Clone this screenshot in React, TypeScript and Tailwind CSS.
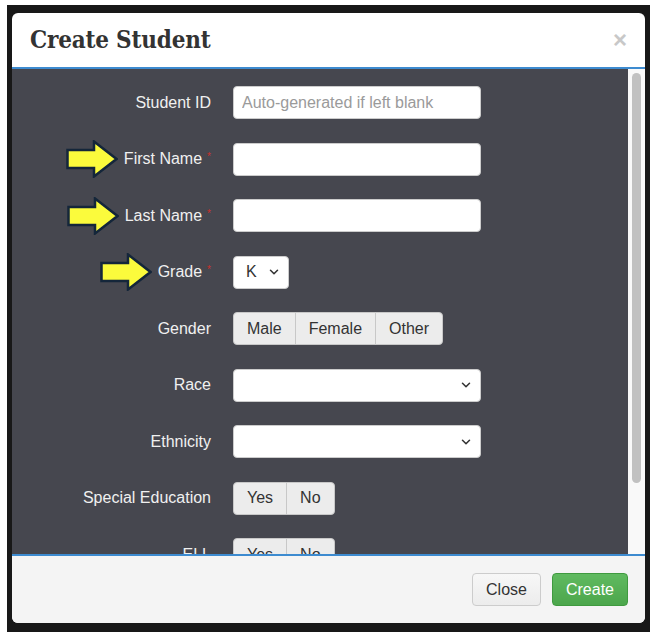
import { ChevronDown } from "lucide-react";

const sans = "font-['Liberation_Sans',Arial,sans-serif]";

function Arrow() {
  return (
    <svg width="52" height="38" viewBox="0 0 52 38" className="shrink-0">
      <polygon
        points="1.5,10 28,10 28,1.5 50.5,19 28,36.5 28,28 1.5,28"
        fill="#fbfb3c"
        stroke="#14263a"
        strokeWidth="2.5"
        strokeLinejoin="miter"
      />
    </svg>
  );
}

function Label({
  text,
  required,
  arrow,
}: {
  text: string;
  required?: boolean;
  arrow?: boolean;
}) {
  return (
    <div className="flex items-center justify-end gap-[6px] h-[33px]">
      {arrow && <Arrow />}
      <span className="text-[16px] text-[#f0f0f0] whitespace-nowrap">
        {text}
        {required && (
          <span className="relative -top-[4px] ml-[5px] text-[10px] text-[#c9302c]">
            *
          </span>
        )}
      </span>
    </div>
  );
}

function TextInput({ placeholder }: { placeholder?: string }) {
  return (
    <input
      className={`w-[248px] h-[33px] rounded-[4px] border border-[#cccccc] bg-white px-[8px] text-[16px] text-[#333] placeholder:text-[#9a9a9a] outline-none ${sans}`}
      placeholder={placeholder}
    />
  );
}

function SelectBox({ width, value }: { width: string; value?: string }) {
  return (
    <div
      className={`${width} h-[33px] rounded-[4px] border border-[#cccccc] bg-white flex items-center justify-between pl-[12px] pr-[7px] text-[16px] text-[#333]`}
    >
      <span>{value ?? ""}</span>
      <ChevronDown size={14} strokeWidth={2.6} className="text-[#333]" />
    </div>
  );
}

function ButtonGroup({ items }: { items: string[] }) {
  return (
    <div className="flex h-[33px]">
      {items.map((item, i) => (
        <button
          key={item}
          className={`px-[13px] h-full bg-[#ececec] border border-[#c8c8c8] text-[16px] text-[#333] ${
            i === 0 ? "rounded-l-[4px]" : "-ml-px"
          } ${i === items.length - 1 ? "rounded-r-[4px]" : ""}`}
        >
          {item}
        </button>
      ))}
    </div>
  );
}

export default function App() {
  return (
    <div className={`w-[657px] h-[642px] bg-white pt-[5px] pl-[7px] ${sans}`}>
      <div className="w-[643px] h-[627px] bg-[#181818] pt-[8px] pl-[5px]">
        <div className="w-[633px] h-[610px] rounded-[6px] bg-white flex flex-col overflow-hidden">
          {/* header */}
          <div className="h-[56px] shrink-0 flex items-center justify-between pl-[18px] pr-[18px] border-b-2 border-[#3d8bd0]">
            <h1 className="font-['DejaVu_Serif_Condensed','DejaVu_Serif',serif] [font-stretch:condensed] font-semibold text-[24px] text-[#333] tracking-[-0.2px]">
              Create Student
            </h1>
            <span className="text-[24px] font-bold leading-none text-[#c8c8c8]">
              ×
            </span>
          </div>

          {/* body */}
          <div className="h-[487px] shrink-0 flex border-b-2 border-[#3d8bd0]">
            <div className="flex-1 bg-[#46474f] overflow-hidden pt-[17px]">
              <div className="grid grid-cols-[199px_1fr] gap-x-[22px] gap-y-[23.5px]">
                <Label text="Student ID" />
                <TextInput placeholder="Auto-generated if left blank" />

                <Label text="First Name" required arrow />
                <TextInput />

                <Label text="Last Name" required arrow />
                <TextInput />

                <Label text="Grade" required arrow />
                <SelectBox width="w-[56px]" value="K" />

                <Label text="Gender" />
                <ButtonGroup items={["Male", "Female", "Other"]} />

                <Label text="Race" />
                <SelectBox width="w-[248px]" />

                <Label text="Ethnicity" />
                <SelectBox width="w-[248px]" />

                <Label text="Special Education" />
                <ButtonGroup items={["Yes", "No"]} />

                <Label text="ELL" />
                <ButtonGroup items={["Yes", "No"]} />
              </div>
            </div>
            <div className="w-[17px] bg-[#f9f9f9] pt-[4px] flex justify-center">
              <div className="w-[9px] h-[410px] rounded-full bg-[#c1c1c1]" />
            </div>
          </div>

          {/* footer */}
          <div className="flex-1 bg-[#f4f4f4] flex items-center justify-end gap-[11px] pr-[17px]">
            <button className="h-[33px] px-[13px] rounded-[4px] border border-[#cccccc] bg-gradient-to-b from-[#f7f7f7] to-[#ececec] text-[16px] text-[#333]">
              Close
            </button>
            <button className="h-[33px] px-[13px] rounded-[4px] border border-[#3f9a3f] bg-gradient-to-b from-[#60ba60] to-[#4ca64c] text-[16px] text-white">
              Create
            </button>
          </div>
        </div>
      </div>
    </div>
  );
}
